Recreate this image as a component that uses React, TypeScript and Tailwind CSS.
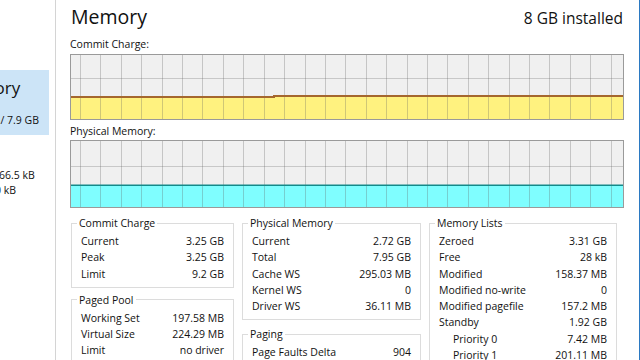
import React from "react";

type Row = { label: string; value: string; indent?: boolean };

const commitCharge: Row[] = [
  { label: "Current", value: "3.25 GB" },
  { label: "Peak", value: "3.25 GB" },
  { label: "Limit", value: "9.2 GB" },
];

const pagedPool: Row[] = [
  { label: "Working Set", value: "197.58 MB" },
  { label: "Virtual Size", value: "224.29 MB" },
  { label: "Limit", value: "no driver" },
];

const physicalMemory: Row[] = [
  { label: "Current", value: "2.72 GB" },
  { label: "Total", value: "7.95 GB" },
  { label: "Cache WS", value: "295.03 MB" },
  { label: "Kernel WS", value: "0" },
  { label: "Driver WS", value: "36.11 MB" },
];

const paging: Row[] = [
  { label: "Page Faults Delta", value: "904" },
  { label: "Page Reads Delta", value: "0" },
];

const memoryLists: Row[] = [
  { label: "Zeroed", value: "3.31 GB" },
  { label: "Free", value: "28 kB" },
  { label: "Modified", value: "158.37 MB" },
  { label: "Modified no-write", value: "0" },
  { label: "Modified pagefile", value: "157.2 MB" },
  { label: "Standby", value: "1.92 GB" },
  { label: "Priority 0", value: "7.42 MB", indent: true },
  { label: "Priority 1", value: "201.11 MB", indent: true },
  { label: "Priority 2", value: "0", indent: true },
];

const gridXs = Array.from({ length: 27 }, (_, k) => Math.round(9 + k * 20.41) + 0.5);

type GraphProps = {
  height: number;
  gridY: number;
  fillPath: string;
  linePath: string;
  fill: string;
  stroke: string;
  strokeWidth: number;
};

const Graph: React.FC<GraphProps> = ({ height, gridY, fillPath, linePath, fill, stroke, strokeWidth }) => (
  <div className="border border-[#9a9a9a] bg-[#f0f0f0]">
    <svg width={552} height={height} className="block">
      <line x1={0} x2={552} y1={gridY} y2={gridY} stroke="#c8c8c8" strokeWidth={1} />
      <path d={fillPath} fill={fill} />
      {gridXs.map((x) => (
        <line key={x} x1={x} x2={x} y1={0} y2={height} stroke="rgba(100,100,100,0.3)" strokeWidth={1} />
      ))}
      <path d={linePath} fill="none" stroke={stroke} strokeWidth={strokeWidth} />
    </svg>
  </div>
);

const GroupBox: React.FC<{ title: string; rows: Row[]; className?: string }> = ({ title, rows, className }) => (
  <fieldset className={`border border-[#dcdcdc] px-[5px] pt-[3px] pb-[5px] ${className ?? ""}`}>
    <legend className="px-[2px] text-[10.5px] leading-[14px]">{title}</legend>
    <div className="px-[4px] text-[10.5px] leading-[16.25px]">
      {rows.map((r) => (
        <div key={r.label} className="flex justify-between whitespace-nowrap">
          <span className={r.indent ? "pl-[14px]" : ""}>{r.label}</span>
          <span>{r.value}</span>
        </div>
      ))}
    </div>
  </fieldset>
);

export default function App() {
  return (
    <div
      className="w-[640px] h-[360px] overflow-hidden bg-white flex text-[#111] border-r border-[#2b79c2]"
      style={{ fontFamily: '"Open Sans", "Noto Sans", sans-serif' }}
    >
      {/* sidebar, cut off at the left edge */}
      <aside className="w-[56px] shrink-0 border-r border-[#d4d4d4] overflow-hidden pt-[70px]">
        <div className="w-[49px] h-[65px] bg-[#cce4f7] pt-[7px]">
          <div className="-ml-[46px] whitespace-nowrap text-[17px] leading-[22px]">Memory</div>
          <div className="-ml-[17px] mt-[14px] whitespace-nowrap text-[10.5px] leading-[14px]">2.7 / 7.9 GB</div>
        </div>
        <div className="mt-[33px] text-[10.5px] leading-[15px]">
          <div className="-ml-[13px] whitespace-nowrap">R: 66.5 kB</div>
          <div className="-ml-[5px] whitespace-nowrap">0 kB</div>
        </div>
      </aside>

      <main className="flex-1 flex flex-col pl-[14px] pr-[15px] pt-[3px]">
        <div className="flex justify-between items-baseline">
          <h1 className="ml-[1px] text-[19.5px] leading-[28px]">Memory</h1>
          <span className="mr-[1px] text-[15.5px] leading-[28px]">8 GB installed</span>
        </div>

        <div className="mt-[5px] text-[10.5px] leading-[14px]">Commit Charge:</div>
        <div className="mt-[3px]">
          <Graph
            height={64}
            gridY={23.5}
            fillPath="M0,41 H203 V40 H552 V64 H0 Z"
            linePath="M0,42 H203 V41 H552"
            fill="#fff27f"
            stroke="#a5672e"
            strokeWidth={2}
          />
        </div>

        <div className="mt-[4px] text-[10.5px] leading-[14px]">Physical Memory:</div>
        <div className="mt-[2px]">
          <Graph
            height={66}
            gridY={25.5}
            fillPath="M0,44 H552 V66 H0 Z"
            linePath="M0,44.25 H552"
            fill="#7ffeff"
            stroke="#148a8a"
            strokeWidth={1.5}
          />
        </div>

        <div className="mt-[8px] ml-[1px] flex gap-[8px] items-start">
          <div className="w-[163px] flex flex-col">
            <GroupBox title="Commit Charge" rows={commitCharge} />
            <GroupBox title="Paged Pool" rows={pagedPool} className="mt-[5px]" />
          </div>
          <div className="w-[179px] flex flex-col">
            <GroupBox title="Physical Memory" rows={physicalMemory} />
            <GroupBox title="Paging" rows={paging} className="mt-[7px]" />
          </div>
          <div className="w-[188px] flex flex-col">
            <GroupBox title="Memory Lists" rows={memoryLists} />
          </div>
        </div>
      </main>
    </div>
  );
}
